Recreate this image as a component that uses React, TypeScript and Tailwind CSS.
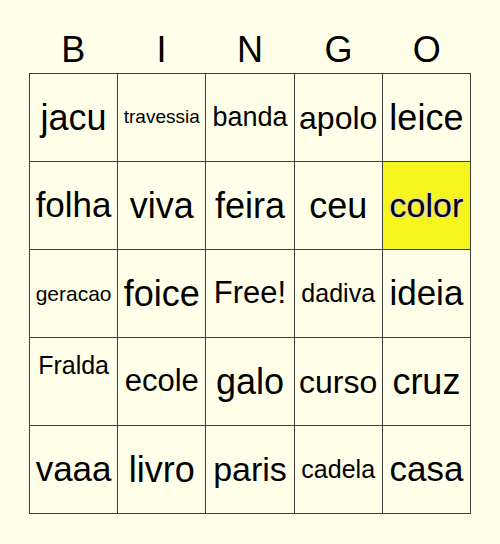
const letters = ['B', 'I', 'N', 'G', 'O'];

type Cell = { word: string; size: string; marked?: boolean; top?: boolean };

const cells: Cell[] = [
  { word: 'jacu', size: 'text-[36px]' },
  { word: 'travessia', size: 'text-[19px]' },
  { word: 'banda', size: 'text-[27px]' },
  { word: 'apolo', size: 'text-[32px]' },
  { word: 'leice', size: 'text-[36px]' },

  { word: 'folha', size: 'text-[35px]' },
  { word: 'viva', size: 'text-[36px]' },
  { word: 'feira', size: 'text-[36px]' },
  { word: 'ceu', size: 'text-[36px]' },
  { word: 'color', size: 'text-[34px]', marked: true },

  { word: 'geracao', size: 'text-[21px]' },
  { word: 'foice', size: 'text-[36px]' },
  { word: 'Free!', size: 'text-[31px]' },
  { word: 'dadiva', size: 'text-[25px]' },
  { word: 'ideia', size: 'text-[35px]' },

  { word: 'Fralda', size: 'text-[25px]', top: true },
  { word: 'ecole', size: 'text-[31px]' },
  { word: 'galo', size: 'text-[36px]' },
  { word: 'curso', size: 'text-[32px]' },
  { word: 'cruz', size: 'text-[36px]' },

  { word: 'vaaa', size: 'text-[35px]' },
  { word: 'livro', size: 'text-[36px]' },
  { word: 'paris', size: 'text-[34px]' },
  { word: 'cadela', size: 'text-[25px]' },
  { word: 'casa', size: 'text-[35px]' },
];

export default function App() {
  return (
    <div className="w-[500px] h-[544px] bg-[#ffffe9] text-black font-['Liberation_Sans',Arial,sans-serif] pt-[29px] pl-[29px]">
      {/* Заголовок */}
      <div className="grid grid-cols-5 w-[442px] h-[44px]">
        {letters.map((l) => (
          <div key={l} className="text-center text-[36px] leading-[41px]">
            {l}
          </div>
        ))}
      </div>

      {/* Поле */}
      <div className="grid grid-cols-5 grid-rows-5 gap-px p-px bg-[#3f3f3f] w-[442px] h-[441px]">
        {cells.map((c, i) => (
          <div
            key={i}
            className={`flex justify-center text-center ${c.top ? 'items-start pt-[9px]' : 'items-center'} ${
              c.marked ? 'bg-[#f6f61c]' : 'bg-[#ffffe9]'
            }`}
          >
            <span
              className={`${c.size} leading-normal whitespace-nowrap ${
                c.marked
                  ? '[text-shadow:1px_0_1px_#d8d0e8,-1px_0_1px_#d8d0e8,0_1px_1px_#d8d0e8,0_-1px_1px_#d8d0e8]'
                  : ''
              }`}
            >
              {c.word}
            </span>
          </div>
        ))}
      </div>
    </div>
  );
}
